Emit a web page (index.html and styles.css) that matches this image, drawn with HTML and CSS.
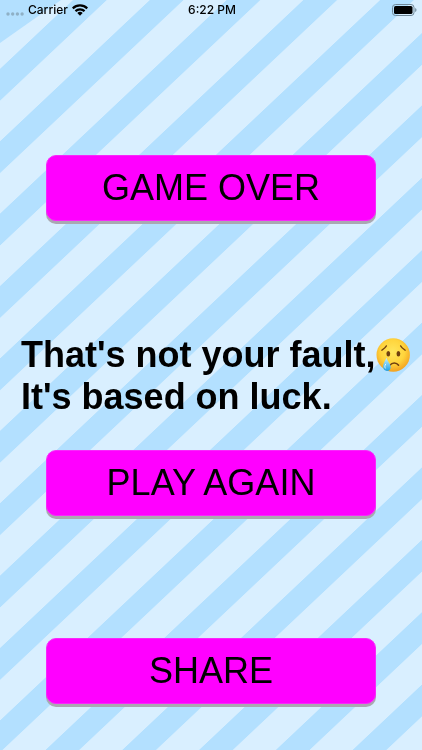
FILE: index.html
```html
<!DOCTYPE html>
<html lang="en">
<head>
  <meta charset="UTF-8">
  <title>Game Over</title>
  <meta name="viewport" content="width=device-width, initial-scale=1.0">
  <link rel="stylesheet" href="styles.css">
</head>
<body>

  <!-- striped background -->
  <svg class="stripes" aria-hidden="true">
    <defs>
      <pattern id="stripe" width="100" height="72.4" patternUnits="userSpaceOnUse" patternTransform="translate(0 68.9) skewY(-43.32)">
        <rect width="100" height="72.4" fill="#d9efff"/>
        <rect width="100" height="31.8" fill="#b3e0ff"/>
      </pattern>
    </defs>
    <rect width="100%" height="100%" fill="url(#stripe)"/>
    <path d="M0 0H61L0 43Z" fill="#b3e0ff"/>
  </svg>

  <header class="status-bar">
    <div class="status-left">
      <svg class="signal" width="18" height="4" viewBox="0 0 18 4" fill="#8fb0c6">
        <circle cx="2" cy="2" r="1.7"/>
        <circle cx="6.7" cy="2" r="1.7"/>
        <circle cx="11.4" cy="2" r="1.7"/>
        <circle cx="16.1" cy="2" r="1.7"/>
      </svg>
      <span>Carrier</span>
      <svg class="wifi" width="16" height="12" viewBox="0 0 16 12">
        <path d="M0 3.6A11.3 11.3 0 0 1 16 3.6L14.5 5.2A9.2 9.2 0 0 0 1.5 5.2Z"/>
        <path d="M2.7 6.3A7.6 7.6 0 0 1 13.3 6.3L11.8 7.9A5.5 5.5 0 0 0 4.2 7.9Z"/>
        <path d="M5.3 9A3.9 3.9 0 0 1 10.7 9L8 11.8Z"/>
      </svg>
    </div>
    <time>6:22 PM</time>
    <div class="status-right">
      <svg width="26" height="12" viewBox="0 0 26 12">
        <rect x="0.5" y="0.5" width="21.5" height="11" rx="3" fill="none" stroke="#6f8797"/>
        <rect x="2" y="2" width="18.5" height="8" rx="1.6"/>
        <path d="M23.2 4A2.2 2.2 0 0 1 23.2 8Z" fill="#6f8797"/>
      </svg>
    </div>
  </header>

  <main>
    <button class="btn">GAME OVER</button>

    <p class="message">
      <span class="line">That's not your fault,<svg class="emoji" role="img" aria-label="crying face" width="35" height="36" viewBox="1 0 35 36">
        <defs>
          <radialGradient id="face" cx="0.48" cy="0.4" r="0.6">
            <stop offset="0" stop-color="#ffe65c"/>
            <stop offset="0.6" stop-color="#ffd43c"/>
            <stop offset="1" stop-color="#f3a11f"/>
          </radialGradient>
          <linearGradient id="tear" x1="0" y1="0" x2="0" y2="1">
            <stop offset="0" stop-color="#c5f0ff"/>
            <stop offset="1" stop-color="#20a0e6"/>
          </linearGradient>
        </defs>
        <circle cx="18.2" cy="18" r="16.7" fill="url(#face)"/>
        <path d="M6.8 13.2C8.2 12.3 10.3 11 11.4 8.9M30.2 13.2C28.8 12.3 26.7 11 25.6 8.9" fill="none" stroke="#754310" stroke-width="1.3" stroke-linecap="round"/>
        <ellipse cx="13.3" cy="16.7" rx="1.9" ry="2.7" fill="#70400f"/>
        <ellipse cx="23.4" cy="16.7" rx="1.9" ry="2.7" fill="#70400f"/>
        <path d="M15 28.2C17 25.2 21.5 25.2 23.6 28.2" fill="none" stroke="#70400f" stroke-width="1.5" stroke-linecap="round"/>
        <path d="M11.4 20.8C10.6 23.6 8 26.2 8 29.6C8 32.3 9.8 34 12 34C14.4 34 16 32.1 15.7 29.5C15.3 26.4 12.3 24.1 11.4 20.8Z" fill="url(#tear)"/>
        <path d="M10.6 27.2C9.6 28.8 9.6 30.2 10.3 31.1" fill="none" stroke="#e8faff" stroke-width="1" stroke-linecap="round"/>
      </svg></span>
      <span class="line">It's based on luck.</span>
    </p>

    <button class="btn">PLAY AGAIN</button>
    <button class="btn share">SHARE</button>
  </main>

</body>
</html>
```

FILE: styles.css
```css
* {
  margin: 0;
  padding: 0;
  box-sizing: border-box;
}

body {
  min-height: 100vh;
  background-color: #d9efff;
  color: #000;
  font-family: "Liberation Sans", Arial, sans-serif;
  overflow-x: hidden;
}

.stripes {
  position: fixed;
  top: 0;
  left: 0;
  z-index: -1;
  width: 100%;
  height: 100%;
}

/* Status bar */
.status-bar {
  display: grid;
  grid-template-columns: 1fr auto 1fr;
  align-items: center;
  height: 20px;
  padding: 0 4px 0 6px;
  font-family: Inter, "Liberation Sans", sans-serif;
  font-size: 12px;
  font-weight: 500;
  line-height: 20px;
}

.status-left {
  display: flex;
  align-items: center;
  gap: 4px;
}

.signal {
  margin-top: 8px;
}

.status-right {
  display: flex;
  justify-content: flex-end;
}

/* Screen */
main {
  display: flex;
  flex-direction: column;
  padding: 135px 46px 44px;
}

.btn {
  width: 100%;
  height: 66px;
  border: 1px solid #f828fa;
  border-radius: 10px;
  background-color: #ff00ff;
  color: #000;
  box-shadow: 0 3px 0 #aaa8b2;
  font-family: inherit;
  font-size: 36px;
  line-height: 40px;
  cursor: pointer;
}

.message {
  margin: 113px -46px 32px;
  padding-left: 21px;
  font-size: 36px;
  font-weight: bold;
  line-height: 42px;
}

.line {
  display: flex;
  align-items: center;
  white-space: nowrap;
}

.share {
  margin-top: 122px;
}
```
